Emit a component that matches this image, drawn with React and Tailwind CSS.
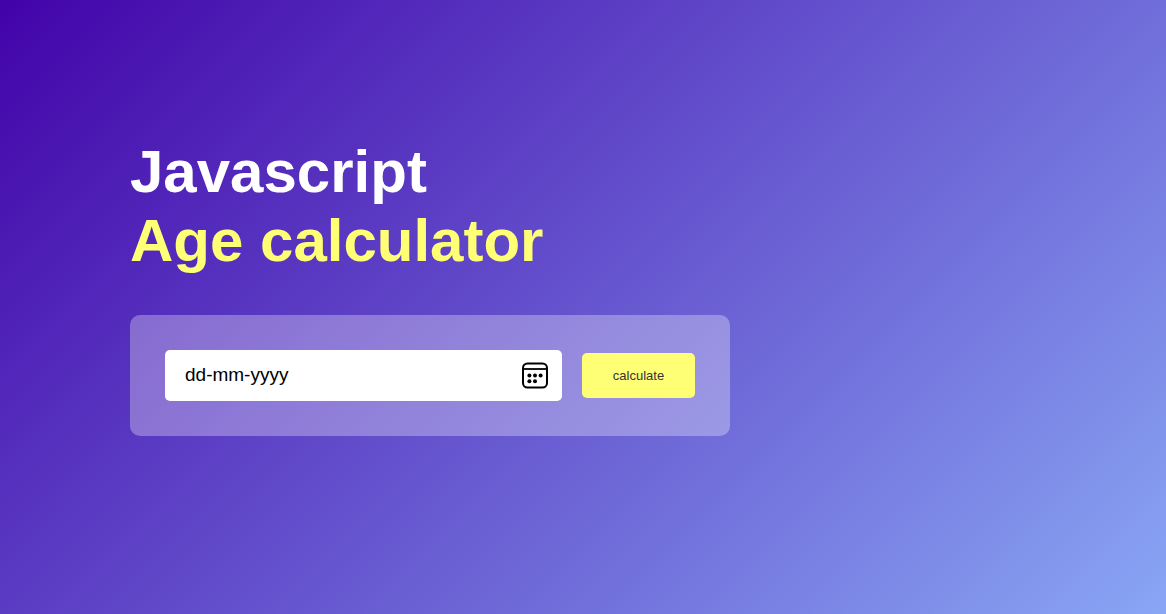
export default function App() {
  return (
    <main className="min-h-screen bg-[linear-gradient(135deg,#4203a9,#89a6f4)] px-6 pt-[137px] pb-10 font-['Liberation_Sans',Arial,sans-serif] sm:px-[130px]">
      <div className="w-full max-w-[600px]">
        <h1 className="text-[60px] leading-[69px] font-bold text-white">
          Javascript
          <br />
          <span className="text-[#ffff76]">Age calculator</span>
        </h1>
        <form
          className="mt-10 flex items-center gap-5 rounded-[10px] bg-white/30 p-[35px]"
          onSubmit={(event) => event.preventDefault()}
        >
          <div className="flex h-[51px] min-w-0 flex-1 items-center rounded-[5px] bg-white pr-3 pl-5">
            <input
              type="text"
              aria-label="Date of birth"
              placeholder="dd-mm-yyyy"
              className="min-w-0 flex-1 bg-transparent text-[19px] text-black outline-none placeholder:text-black"
            />
            <button type="button" aria-label="Open calendar" className="shrink-0">
              <svg width="30" height="30" viewBox="0 0 30 30" fill="none" stroke="black" strokeWidth="2">
                <rect x="3" y="2.500" width="24" height="24" rx="4.500" />
                <path d="M3 8h24" strokeWidth="1.800" />
                <g fill="black" stroke="none">
                  <circle cx="9.400" cy="14.500" r="2" />
                  <circle cx="15" cy="14.500" r="2" />
                  <circle cx="20.600" cy="14.500" r="2" />
                  <circle cx="9.400" cy="20.200" r="2" />
                  <circle cx="15" cy="20.200" r="2" />
                </g>
              </svg>
            </button>
          </div>
          <button
            type="submit"
            className="h-[45px] w-[113px] shrink-0 rounded-[5px] bg-[#ffff76] text-[13px] text-[#333]"
          >
            calculate
          </button>
        </form>
      </div>
    </main>
  );
}
